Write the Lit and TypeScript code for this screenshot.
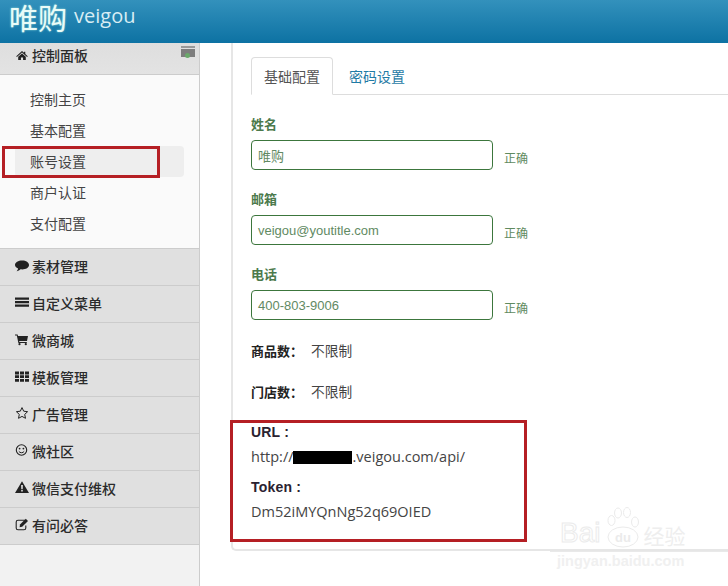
import { LitElement, html, css, svg } from "lit";
import { customElement } from "lit/decorators.js";

const icons: Record<string, unknown> = {
  home: svg`<path d="M7 2 L9.5 4.2 V2.8 H11 V5.6 L14 8.4 L13.2 9.3 L7 3.9 L.8 9.3 L0 8.4 Z M2.4 9 L7 5 L11.6 9 V13 H8.3 V10 H5.7 V13 H2.4 Z" fill="#222"/>`,
  comment: svg`<path d="M7.2 2.5 C11 2.5 14 4.4 14 7 C14 9.6 11 11.4 7.2 11.4 C6.6 11.4 6 11.4 5.5 11.3 C4.5 12.2 3.2 13 1.6 13.2 C2.4 12.4 3 11.5 3.1 10.5 C1.2 9.7 0 8.4 0 7 C0 4.4 3.2 2.5 7.2 2.5 Z" fill="#222"/>`,
  bars: svg`<path d="M0 2.5 H14 V4.7 H0 Z M0 6 H14 V8.2 H0 Z M0 9.5 H14 V11.7 H0 Z" fill="#222"/>`,
  cart: svg`<path d="M0 2.5 H2.6 L3 4 H13 L12 9 H4.2 L4.4 10 H11.8 V11 H3.4 L1.8 3.6 H0 Z" fill="#222"/><circle cx="4.5" cy="12.2" r="1.1" fill="#222"/><circle cx="10.8" cy="12.2" r="1.1" fill="#222"/>`,
  grid: svg`<path d="M0 2.5 H4 V5.4 H0 Z M5 2.5 H9 V5.4 H5 Z M10 2.5 H14 V5.4 H10 Z M0 6.2 H4 V9.1 H0 Z M5 6.2 H9 V9.1 H5 Z M10 6.2 H14 V9.1 H10 Z M0 9.9 H4 V12.8 H0 Z M5 9.9 H9 V12.8 H5 Z M10 9.9 H14 V12.8 H10 Z" fill="#222"/>`,
  star: svg`<path d="M7 1.6 L8.7 5.2 L12.6 5.7 L9.7 8.4 L10.5 12.3 L7 10.4 L3.5 12.3 L4.3 8.4 L1.4 5.7 L5.3 5.2 Z" fill="none" stroke="#222" stroke-width="1"/>`,
  smile: svg`<circle cx="6.5" cy="7" r="5.2" fill="none" stroke="#222" stroke-width="1.1"/><circle cx="4.6" cy="5.6" r=".9" fill="#222"/><circle cx="8.4" cy="5.6" r=".9" fill="#222"/><path d="M3.8 8.3 C4.8 10.2 8.2 10.2 9.2 8.3" fill="none" stroke="#222" stroke-width="1"/>`,
  warn: svg`<path fill-rule="evenodd" d="M7 1.2 L14 13 H0 Z M6.1 5 L6.3 9.2 H7.7 L7.9 5 Z M6.2 10 V11.6 H7.8 V10 Z" fill="#222"/>`,
  edit: svg`<path d="M10 3.2 H3 C2 3.2 1.2 4 1.2 5 V11 C1.2 12 2 12.8 3 12.8 H9 C10 12.8 10.8 12 10.8 11 V8.5" fill="none" stroke="#222" stroke-width="1.1"/><path d="M5 7.6 L10.8 1.8 L13 4 L7.2 9.8 L4.6 10.2 Z" fill="#222"/>`,
};

const groups = [
  ["comment", "素材管理"],
  ["bars", "自定义菜单"],
  ["cart", "微商城"],
  ["grid", "模板管理"],
  ["star", "广告管理"],
  ["smile", "微社区"],
  ["warn", "微信支付维权"],
  ["edit", "有问必答"],
];

const sub = ["控制主页", "基本配置", "账号设置", "商户认证", "支付配置"];
const fields = [
  ["姓名", "唯购"],
  ["邮箱", "veigou@youtitle.com"],
  ["电话", "400-803-9006"],
];

@customElement("app-root")
export class AppRoot extends LitElement {
  static styles = css`
    :host {
      display: block;
      width: 728px;
      height: 586px;
      position: relative;
      overflow: hidden;
      background: #fff;
      font-family: "Liberation Sans", "Noto Sans CJK SC", sans-serif;
      font-size: 13px;
      color: #333;
    }
    .top {
      height: 43px;
      box-sizing: border-box;
      background: linear-gradient(#3391bc, #0d72a3);
      display: flex;
      align-items: center;
      gap: 7px;
      padding: 0 0 9px 9px;
      color: #fff;
    }
    .logo {
      font-family: "Noto Sans CJK SC", sans-serif;
      font-size: 29px;
      line-height: 32px;
      font-weight: 400;
      color: #eafcf8;
      text-shadow: 0 0 2px #9fe3dc;
    }
    .word {
      font-family: "Open Sans", sans-serif;
      font-size: 20px;
      line-height: 28px;
      margin-bottom: 2px;
      color: #d8edf4;
    }
    .body {
      display: flex;
      height: 543px;
    }
    .side {
      width: 200px;
      box-sizing: border-box;
      flex: none;
      background: #f2f2f2;
      border-right: 1px solid #ccc;
      position: relative;
    }
    .group {
      height: 37px;
      box-sizing: border-box;
      display: flex;
      align-items: center;
      gap: 3px;
      padding: 0 0 3px 15px;
      background: #e0e0e0;
      border-bottom: 1px solid #ccc;
      font-family: "Noto Sans CJK SC", sans-serif;
      font-size: 14px;
      font-weight: 500;
      color: #2b2b2b;
    }
    .group.first {
      height: 32px;
      background: linear-gradient(#dedede 0, #e3e3e3 100%);
      padding-bottom: 7px;
    }
    .group svg {
      width: 14px;
      height: 15px;
      flex: none;
    }
    .subs {
      height: 174px;
      box-sizing: border-box;
      padding: 9px 15px 0 15px;
      background: #fafafa;
      border-bottom: 1px solid #ccc;
    }
    .sub {
      height: 31px;
      box-sizing: border-box;
      display: flex;
      align-items: center;
      padding: 0 0 2px 15px;
      border-radius: 4px;
      font-family: "Noto Sans CJK SC", sans-serif;
      font-size: 14px;
      color: #444;
    }
    .sub.on {
      background: #eeeeee;
    }
    .collapse {
      position: absolute;
      left: 181px;
      top: 3px;
      width: 14px;
      height: 11px;
      background: linear-gradient(#999 0 2px, transparent 2px 3px, #7d7d7d 3px);
    }
    .collapse::after {
      content: "";
      position: absolute;
      left: 4px;
      top: 7px;
      width: 5px;
      height: 5px;
      border-radius: 50%;
      background: #6aa86a;
    }
    .main {
      flex: 1;
      padding: 0 0 0 31px;
      min-width: 0;
    }
    .card {
      height: 508px;
      box-sizing: border-box;
      border: 2px solid #e6e6e6;
      border-top: 0;
      border-right: 0;
      border-bottom-left-radius: 5px;
      padding: 14px 0 0 18px;
      background: #fff;
    }
    .tabs {
      display: flex;
      height: 38px;
      box-sizing: border-box;
      border-bottom: 1px solid #ddd;
      font-family: "Noto Sans CJK SC", sans-serif;
      font-size: 14px;
    }
    .tab {
      height: 38px;
      box-sizing: border-box;
      padding: 0 12px;
      display: flex;
      align-items: center;
      color: #1f7ba5;
      border: 1px solid transparent;
      margin-right: 3px;
    }
    .tab.active {
      width: 82px;
      color: #555;
      background: #fff;
      border-color: #ddd #ddd #fff;
      border-radius: 4px 4px 0 0;
    }
    .field {
      margin-top: 22px;
      height: 53px;
      display: grid;
      grid-template-columns: 242px auto;
      grid-template-rows: 17px 30px;
      row-gap: 6px;
      column-gap: 11px;
      color: #4c7a4c;
    }
    .label {
      grid-column: 1 / 3;
      font-family: "Noto Sans CJK SC", sans-serif;
      font-weight: 700;
      font-size: 13px;
      line-height: 15px;
      margin-top: -1px;
    }
    .input {
      border: 1px solid #3c763d;
      border-radius: 4px;
      box-sizing: border-box;
      padding: 0 6px;
      display: flex;
      align-items: center;
      font-size: 13px;
      color: #628a63;
    }
    .ok {
      font-family: "Noto Sans CJK SC", sans-serif;
      font-size: 12px;
      align-self: center;
      padding-top: 4px;
      color: #5f8a60;
    }
    .stats {
      margin-top: -2px;
    }
    .stat {
      font-family: "Noto Sans CJK SC", sans-serif;
      font-size: 13.7px;
      height: 18px;
      line-height: 18px;
      color: #444;
      margin-top: 23px;
    }
    .stat b {
      font-size: 13px;
      color: #222;
      margin-right: 8px;
    }
    .k {
      font-weight: 700;
      font-size: 14px;
      letter-spacing: 0.2px;
      line-height: 18px;
      color: #2a2230;
    }
    .url {
      margin-top: 23px;
    }
    .v {
      font-family: "Open Sans", sans-serif;
      font-size: 14.5px;
      line-height: 20px;
      color: #444;
      margin-top: 6px;
      white-space: nowrap;
    }
    .tk {
      margin-top: 11px;
    }
    .hide {
      display: inline-block;
      width: 59px;
      height: 13px;
      vertical-align: -2px;
      margin: 0 1px 0 -1px;
      background: #000;
    }
    .mark {
      position: absolute;
      border: 3px solid #b51f24;
      box-sizing: border-box;
      pointer-events: none;
    }
    .m1 {
      left: 2px;
      top: 146px;
      width: 158px;
      height: 32px;
    }
    .m2 {
      left: 230px;
      top: 420px;
      width: 297px;
      height: 122px;
    }
    .wm {
      position: absolute;
      left: 560px;
      top: 507px;
      width: 168px;
      color: transparent;
      pointer-events: none;
      font-family: "Liberation Sans", sans-serif;
    }
    .wmtop {
      display: flex;
      align-items: flex-end;
      height: 41px;
      font-size: 28px;
      line-height: 30px;
      -webkit-text-stroke: 1px #ebebeb;
    }
    .wmtop svg {
      width: 36px;
      height: 43px;
      flex: none;
      margin: 0 2px 0 5px;
    }
    .wmcn {
      font-family: "Noto Sans CJK SC", sans-serif;
      font-size: 21px;
      line-height: 26px;
      color: #eeeeee;
      -webkit-text-stroke: 0;
    }
    .wmrule {
      margin: 3px 0 0 -10px;
      height: 1px;
      background: #e9e9e9;
    }
    .wmurl {
      font-size: 14.5px;
      line-height: 16px;
      font-weight: 700;
      margin: 1px 0 0 -3px;
      color: #f0f0f0;
    }
  `;

  render() {
    return html`
      <div class="top"><span class="logo">唯购</span><span class="word">veigou</span></div>
      <div class="body">
        <aside class="side">
          <div class="group first">
            <svg viewBox="-1.5 -1.5 17 18">${icons.home}</svg><span>控制面板</span>
          </div>
          <div class="collapse"></div>
          <div class="subs">
            ${sub.map((s, i) => html`<div class="sub ${i === 2 ? "on" : ""}">${s}</div>`)}
          </div>
          ${groups.map(
            ([ic, t]) =>
              html`<div class="group"><svg viewBox="0 0 14 15">${icons[ic]}</svg><span>${t}</span></div>`
          )}
        </aside>
        <main class="main">
          <div class="card">
            <div class="tabs">
              <div class="tab active">基础配置</div>
              <div class="tab">密码设置</div>
            </div>
            ${fields.map(
              ([l, v]) => html`<div class="field">
                <div class="label">${l}</div>
                <div class="input">${v}</div>
                <div class="ok">正确</div>
              </div>`
            )}
            <div class="stats">
              <div class="stat"><b>商品数：</b>不限制</div>
              <div class="stat"><b>门店数：</b>不限制</div>
            </div>
            <div class="k url">URL :</div>
            <div class="v">http://<span class="hide"></span>.veigou.com/api/</div>
            <div class="k tk">Token :</div>
            <div class="v">Dm52iMYQnNg52q69OIED</div>
          </div>
        </main>
      </div>
      <div class="mark m1"></div>
      <div class="mark m2"></div>
      <div class="wm">
        <div class="wmtop">
          <span>Bai</span>
          <svg viewBox="0 0 36 43">
            <g fill="none" stroke="#ebebeb" stroke-width="1">
              <ellipse cx="6.5" cy="15.5" rx="3.5" ry="5" />
              <ellipse cx="13" cy="8" rx="3.5" ry="5" />
              <ellipse cx="22" cy="7.5" rx="3.5" ry="5" />
              <ellipse cx="30" cy="17" rx="3.5" ry="5" />
              <ellipse cx="18" cy="32" rx="15" ry="10" />
            </g>
            <text x="10" y="37" font-size="13" font-weight="700" fill="#ebebeb" stroke="none">du</text>
          </svg>
          <span class="wmcn">经验</span>
        </div>
        <div class="wmrule"></div>
        <div class="wmurl">jingyan.baidu.com</div>
      </div>
    `;
  }
}
